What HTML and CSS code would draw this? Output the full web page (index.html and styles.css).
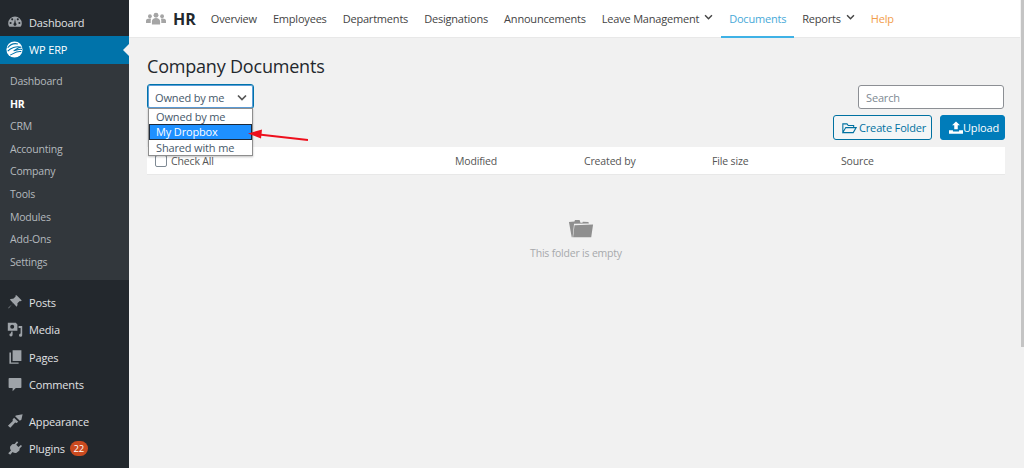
FILE: index.html
```html
<!DOCTYPE html>
<html lang="en">
<head>
<meta charset="utf-8">
<title>Company Documents</title>
<link rel="stylesheet" href="styles.css">
</head>
<body>
<aside class="sidebar">
  <ul class="menu first">
    <li class="item"><svg class="ico" viewBox="0 0 20 20"><path d="M10 3a8.500 8.500 0 0 0-8.500 8.500c0 2 .6 3.500 1.700 4.500h13.600c1.100-1 1.700-2.500 1.700-4.500A8.500 8.500 0 0 0 10 3zM4.500 12.500a1.300 1.300 0 1 1 0-2.600 1.300 1.300 0 0 1 0 2.600zM6.500 8a1.300 1.300 0 1 1 0-2.600A1.300 1.300 0 0 1 6.500 8zM10 15a2 2 0 0 1-1-3.700l1-5.300 1 5.300A2 2 0 0 1 10 15zm3.500-7a1.300 1.300 0 1 1 0-2.600 1.300 1.300 0 0 1 0 2.600zm2 4.500a1.300 1.300 0 1 1 0-2.600 1.300 1.300 0 0 1 0 2.600z"/></svg><span>Dashboard</span></li>
  </ul>
  <div class="current">
    <svg class="logo" viewBox="0 0 20 20"><circle cx="10" cy="10" r="9.500" fill="#fff"/><path d="M2 8c3-4 8-5.500 12-4.500M2 12c3-3 10-7 16-4.500-4-.5-6 3-9 4 3 0 6-2.500 10-1.500M5 16.500c3-1 7-5 13-4" fill="none" stroke="#0073aa" stroke-width="1.200"/></svg>
    <span>WP ERP</span>
  </div>
  <ul class="submenu">
    <li>Dashboard</li>
    <li class="on">HR</li>
    <li>CRM</li>
    <li>Accounting</li>
    <li>Company</li>
    <li>Tools</li>
    <li>Modules</li>
    <li>Add-Ons</li>
    <li>Settings</li>
  </ul>
  <ul class="menu group">
    <li class="item"><svg class="ico" viewBox="0 0 20 20"><path d="M12 1.500l6.500 6.500-1.500 1-1-.3-3 3c.4 1.700 0 3.200-1 4.300L7.700 11.200 2.500 17.500 1.500 18l.5-1 5.800-5.500L3.500 7c1.100-1 2.600-1.400 4.300-1l3-3-.3-1z"/></svg><span>Posts</span></li>
    <li class="item"><svg class="ico" viewBox="0 0 20 20"><path d="M1 1h10l2 2v8H1zm5.500 7.500a2.500 2.500 0 1 0 0-5 2.500 2.500 0 0 0 0 5zM14.500 5H19v11.500a2 2 0 1 1-2-2V7.500h-2.500zM7 12v4a2 2 0 1 1-2-2c0-.3 0-1 .5-2z"/></svg><span>Media</span></li>
    <li class="item"><svg class="ico" viewBox="0 0 20 20"><path d="M7 1.500h11v13.500H7zM5 4.500V17h9.500v1.500H3v-14z"/></svg><span>Pages</span></li>
    <li class="item"><svg class="ico" viewBox="0 0 20 20"><path d="M3 2.500h14a1 1 0 0 1 1 1V14a1 1 0 0 1-1 1h-6l-4 4v-4H3a1 1 0 0 1-1-1V3.500a1 1 0 0 1 1-1z"/></svg><span>Comments</span></li>
  </ul>
  <ul class="menu group tight">
    <li class="item"><svg class="ico" viewBox="0 0 20 20"><path d="M11 3l8.500-1.500-1.500 7-2 1.200-5.800-5.500zM8.800 6l5.200 5-2 1.500-1.800-.5-6 6.500-3-2.500 6-6L7 8z"/></svg><span>Appearance</span></li>
    <li class="item"><svg class="ico" viewBox="0 0 20 20"><path d="M12.500 1.500l1.500 1.500-2.500 3 2.800 2.800 3-2.700 1.500 1.500-3 3-.3 2.500L12 16c-2 .6-3.500 0-5-1l-3 3.500-2.500-2L5 13c-1-1.500-1.500-3-1-5l2.500-2.700L9.500 5z"/></svg><span>Plugins</span><b class="badge">22</b></li>
  </ul>
</aside>
<div class="main">
  <nav class="topnav">
    <div class="brand">
      <svg class="people" viewBox="0 0 22 14"><circle cx="11" cy="3.500" r="2.700"/><circle cx="4.300" cy="4.500" r="2.100"/><circle cx="17.700" cy="4.500" r="2.100"/><path d="M6.500 13.500V10c0-2 2-3.500 4.500-3.500s4.500 1.500 4.500 3.500v3.500zM0 12V9.500C0 8 1.800 7 3.800 7c.7 0 1.300.1 1.800.4-.3.700-.4 1.500-.4 2.600v2zM22 12V9.500C22 8 20.200 7 18.200 7c-.7 0-1.300.1-1.800.4.300.7.400 1.500.4 2.600v2z"/></svg>
      <strong>HR</strong>
    </div>
    <a>Overview</a>
    <a>Employees</a>
    <a>Departments</a>
    <a>Designations</a>
    <a>Announcements</a>
    <a>Leave Management<svg class="chev" viewBox="0 0 10 7"><path d="M1 1.500l4 4 4-4"/></svg></a>
    <a class="active">Documents</a>
    <a>Reports<svg class="chev" viewBox="0 0 10 7"><path d="M1 1.500l4 4 4-4"/></svg></a>
    <a class="help">Help</a>
  </nav>
  <section class="content">
    <h1>Company Documents</h1>
    <div class="filters">
      <div class="select">
        <span>Owned by me</span>
        <svg class="chev dark" viewBox="0 0 10 7"><path d="M1 1.500l4 4 4-4"/></svg>
        <ul class="options">
          <li>Owned by me</li>
          <li class="picked">My Dropbox</li>
          <li>Shared with me</li>
        </ul>
      </div>
      <input class="search" type="text" placeholder="Search">
    </div>
    <div class="actions">
      <button class="btn outline"><svg class="btn-ico" viewBox="0 0 18 14"><path d="M1 12.500V2h5l1.500 2H14v2.500M1 12.500h12.500L17 6.500H4.500z"/></svg>Create Folder</button>
      <button class="btn solid"><svg class="btn-ico up" viewBox="0 0 16 14"><path d="M8 0l4.500 4.500H10V9H6V4.500H3.500zM0 10h4.500v1.500h7V10H16v4H0z"/></svg>Upload</button>
    </div>
    <div class="thead">
      <label class="check"><i class="box"></i>Check All</label>
      <span class="col modified">Modified</span>
      <span class="col created">Created by</span>
      <span class="col size">File size</span>
      <span class="col">Source</span>
    </div>
    <div class="empty">
      <svg class="folder" viewBox="0 0 28 20"><path d="M1 3l6-.5.500-1.700h5l.5 1.700.5 1.300h2l.5-1 6 .2.500 1.500-16 .5L5 19.500H4zM7 6.500l20-.7-2 13.700H5.500z"/></svg>
      <p>This folder is empty</p>
    </div>
  </section>
  <svg class="pointer" viewBox="0 0 60 20"><path d="M60 15L11 9.500" stroke="#ee0f1c" stroke-width="2" fill="none"/><path d="M0 8.500l14-4-1 9z" fill="#ee0f1c"/></svg>
</div>
<div class="scrollbar"></div>
</body>
</html>
```
FILE: styles.css
```css
* { box-sizing: border-box; }
html, body { margin: 0; height: 100%; overflow: hidden; }
body {
  display: flex;
  height: 468px;
  background: #f1f1f1;
  font-family: "Open Sans", "Noto Sans", sans-serif;
  font-size: 11px;
  letter-spacing: -.15px;
  color: #444;
}
ul { list-style: none; margin: 0; padding: 0; }

.sidebar { width: 129px; flex: none; background: #23282d; color: #eee; }
.menu.first { padding-top: 8.700px; }
.item { height: 27.300px; display: flex; align-items: center; padding-left: 7px; color: #e0e2e4; }
.ico { width: 16px; height: 16px; fill: #9ea3a8; margin-right: 6px; flex: none; }
.current {
  height: 28px; background: #0073aa; color: #fff; display: flex; align-items: center;
  padding-left: 6px; position: relative;
}
.current::after {
  content: ""; position: absolute; right: 0; top: 8px;
  border: 6px solid transparent; border-right-color: #f1f1f1; border-left-width: 0;
}
.logo { width: 17px; height: 17px; margin-right: 6px; }
.submenu { background: #32373c; padding: 6px 0 7px; }
.submenu li { height: 22.600px; line-height: 22.600px; padding-left: 10px; color: #b4b9be; font-size: 10.500px; letter-spacing: -.2px; }
.submenu .on { color: #fff; font-weight: 700; }
.group { padding-top: 8.500px; }
.group.tight { padding-top: 9.500px; }
.badge {
  width: 18px; height: 15px; margin-left: 5px; border-radius: 8px; background: #ca4a1f; color: #fff;
  font-weight: 400; font-size: 9.500px; line-height: 15px; text-align: center;
}

.main { flex: 1; min-width: 0; position: relative; margin-right: 4px; }
.topnav {
  height: 38px; background: #fff; border-bottom: 1px solid #e8e8e8; display: flex; align-items: stretch;
  padding-left: 17px; letter-spacing: -.2px;
}
.brand { display: flex; align-items: center; gap: 7px; margin-right: 7px; }
.people { width: 20px; height: 13px; fill: #a5a5a5; }
.brand strong { font-size: 16px; color: #23282d; font-weight: 700; letter-spacing: 0; }
.topnav a {
  display: flex; align-items: center; padding: 0 8px; color: #444;
  border-bottom: 2px solid transparent; height: 38px;
}
.topnav .active { color: #48a9d8; border-bottom-color: #3fb2e6; }
.topnav .help { color: #f29d4b; }
.chev { width: 9px; height: 6px; margin-left: 5px; margin-top: -3px; fill: none; stroke: #444; stroke-width: 1.700; flex: none; }

.content { padding: 16px 15px 0 18px; position: relative; }
h1 { margin: 0; font-size: 18px; line-height: 25px; font-weight: 400; color: #23282d; letter-spacing: -.2px; }
.filters { display: flex; justify-content: space-between; align-items: flex-start; margin-top: 5px; }
.select {
  width: 107px; height: 25px; background: #fff; border: 1px solid #0073aa; border-radius: 3px;
  box-shadow: 0 0 0 1px #5b9dd9 inset; display: flex; justify-content: space-between; align-items: center;
  padding: 1px 6px 0 7px; position: relative; color: #46586a;
}
.select .dark { margin: 0; width: 10px; height: 7px; stroke: #555; }
.options {
  position: absolute; left: 0; top: 23px; width: 105px; background: #fff; border: 1px solid #8e8e8e;
  box-shadow: 0 1px 2px rgba(0,0,0,.25); z-index: 3;
}
.options li { height: 15.300px; line-height: 15px; padding-left: 7px; color: #46586a; }
.options .picked { background: #1e90ff; color: #fff; outline: 1px solid #1d2a3a; outline-offset: -1px; }
.search {
  width: 146px; height: 24px; border: 1px solid #8c8f94; border-radius: 3px; background: #fff; padding: 0 7px;
  font: inherit; letter-spacing: inherit; color: #555; outline: none; margin: 1px 1px 0 0;
}
.search::placeholder { color: #7e8993; }
.actions { display: flex; justify-content: flex-end; gap: 8px; margin-top: 6px; }
.btn {
  height: 25px; border-radius: 3px; font: inherit; letter-spacing: inherit; display: flex; align-items: center;
  white-space: nowrap; padding: 0 0 0 8px;
}
.outline { width: 99px; border: 1px solid #0071a1; background: #f3f5f6; color: #0071a1; }
.solid { width: 65px; border: 1px solid #007cba; background: #007cba; color: #fff; }
.btn-ico { width: 15px; height: 12px; margin-right: 2px; fill: none; stroke: #0071a1; stroke-width: 1.300; flex: none; }
.btn-ico.up { fill: #fff; stroke: none; margin-right: 0; width: 14px; height: 13px; }
.thead {
  height: 28px; background: #fff; margin-top: 7px; border-bottom: 1px solid #e8e8e8; display: flex; align-items: center;
  font-size: 10.500px; color: #555;
}
.check { width: 308px; display: flex; align-items: center; padding-left: 8px; }
.box { width: 12px; height: 12px; border: 1px solid #7e8993; border-radius: 2px; background: #fff; margin-right: 4px; }
.col { display: block; }
.modified { width: 129px; }
.created { width: 128px; }
.size { width: 129px; }
.empty { text-align: center; padding-top: 44px; color: #a7a9ac; font-size: 10.500px; letter-spacing: -.2px; }
.folder { width: 26px; height: 19px; fill: #8f8f8f; display: block; margin-left: calc(50% - 8px); }
.empty p { margin: 8px 0 0; }

.pointer { position: absolute; left: 119px; top: 125px; width: 60px; height: 20px; z-index: 5; }
.scrollbar { position: absolute; right: 0; top: 0; width: 3px; height: 347px; background: #c4c4c4; }
```
